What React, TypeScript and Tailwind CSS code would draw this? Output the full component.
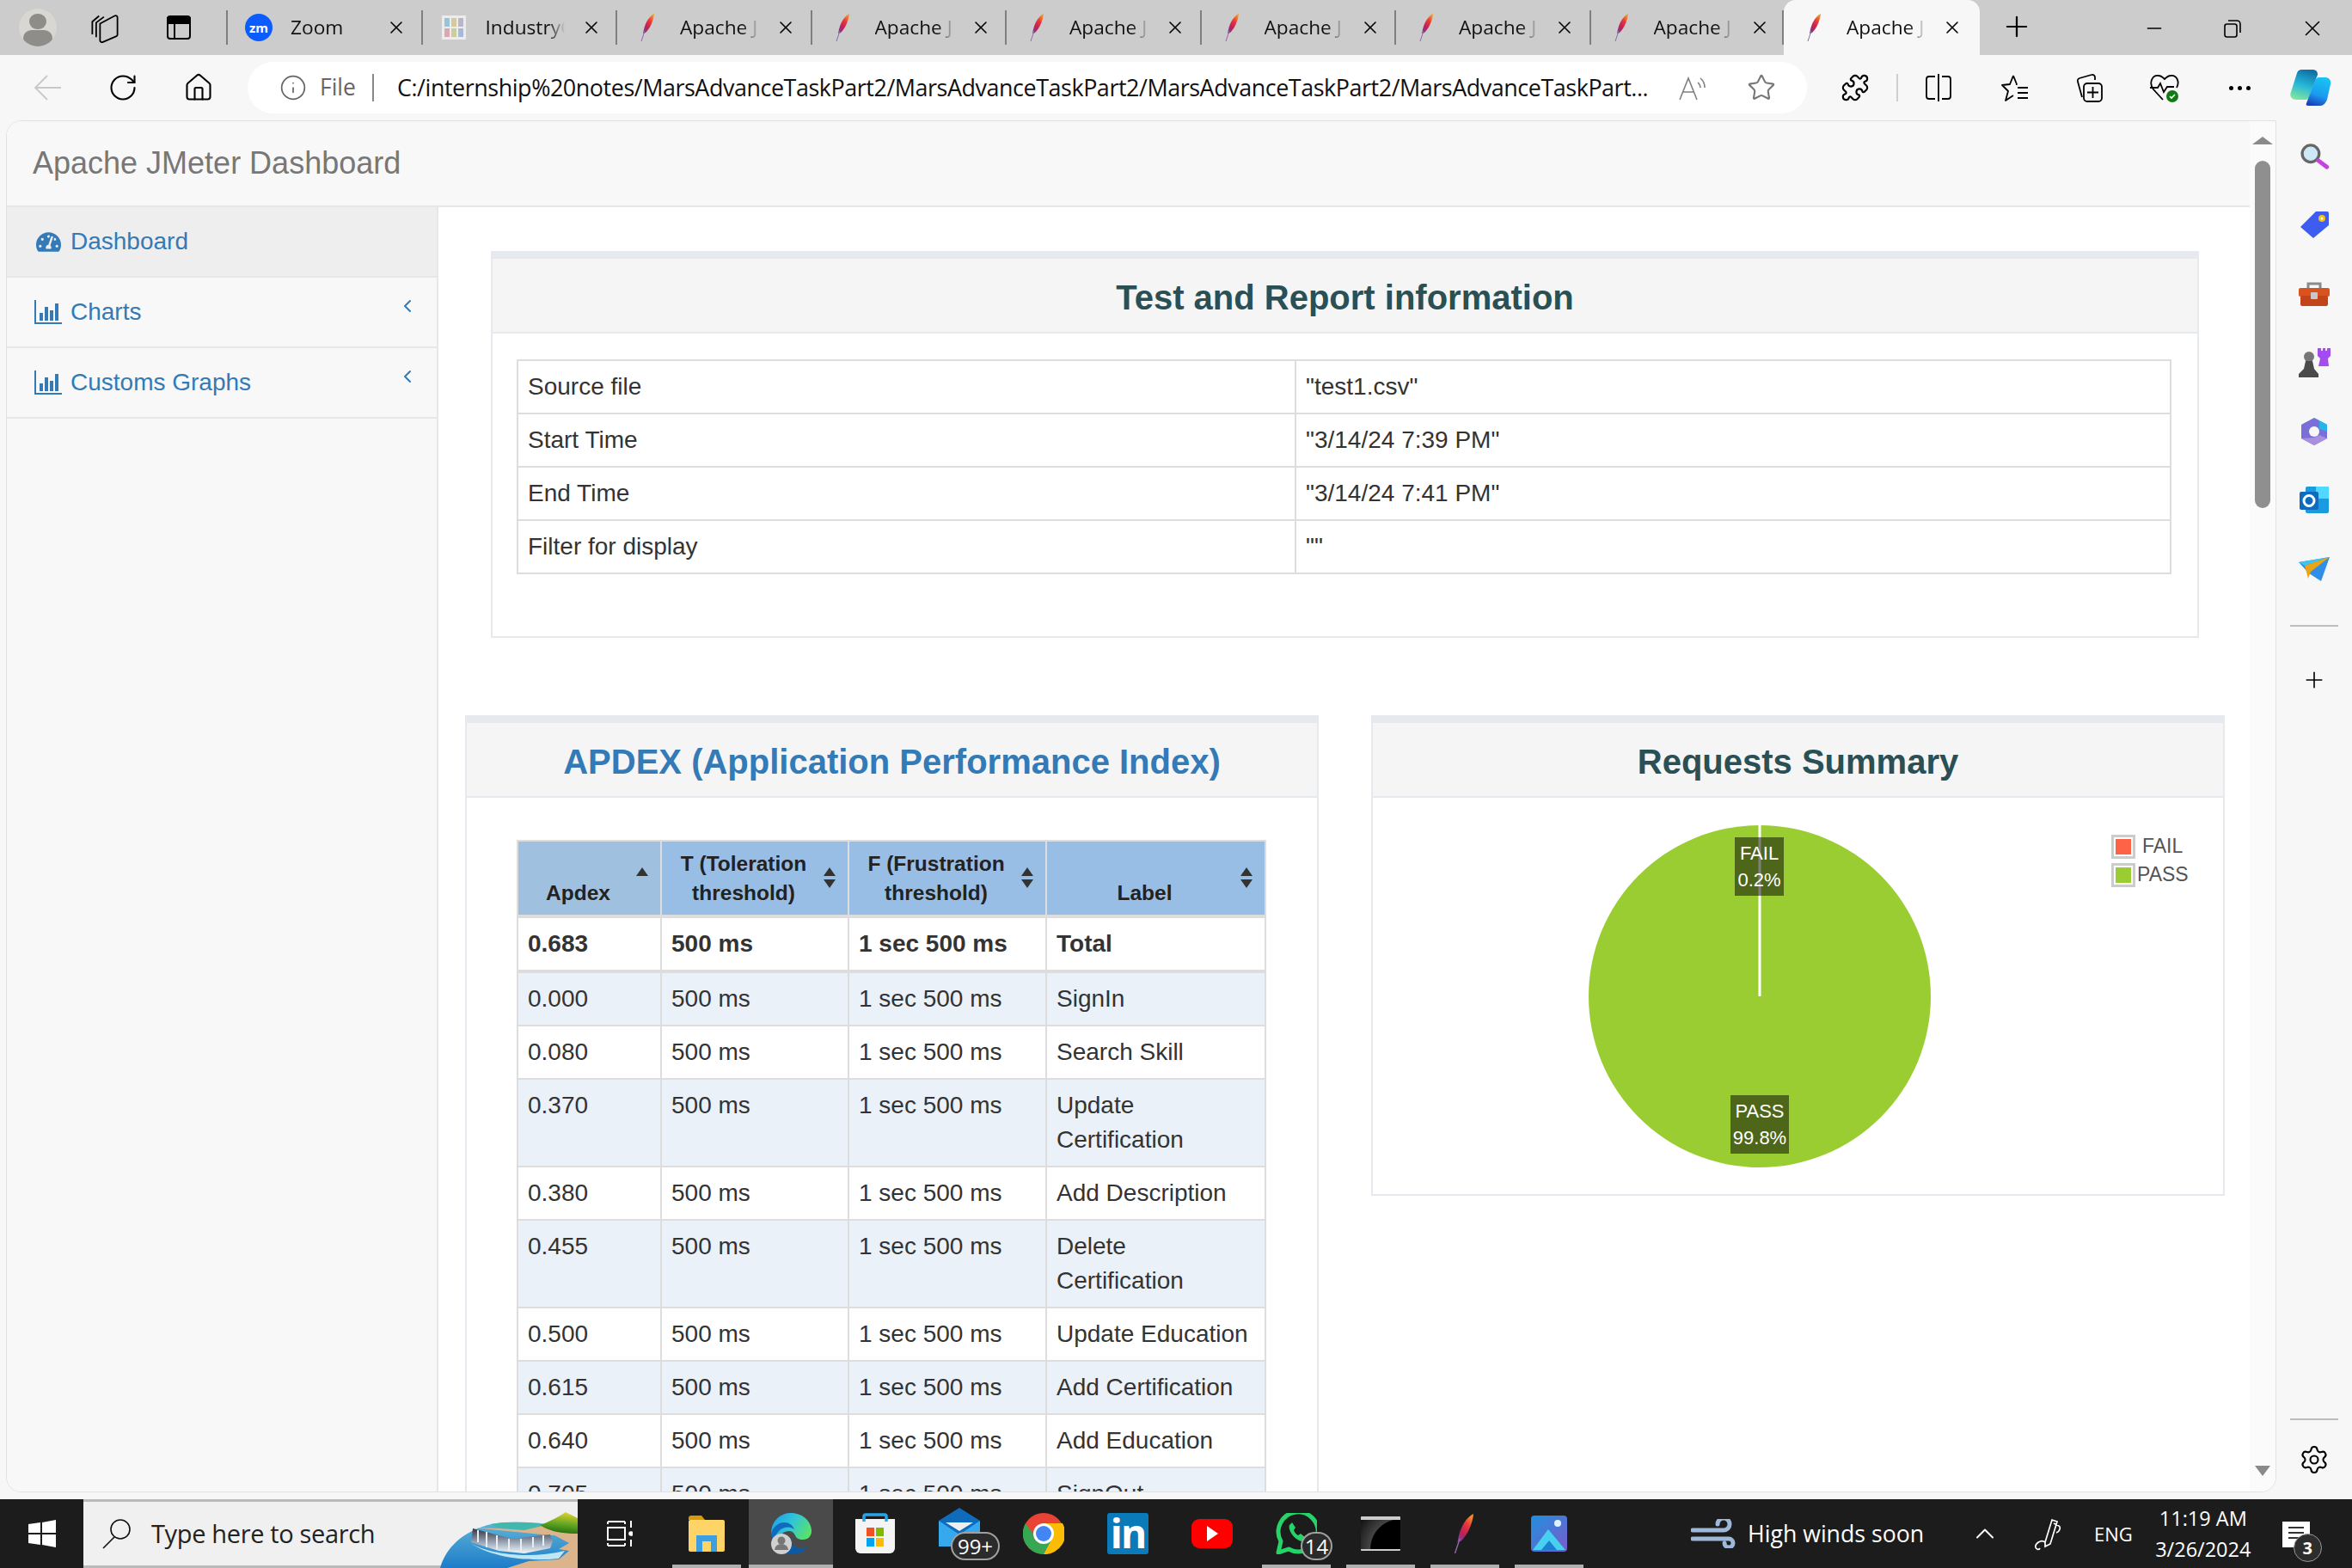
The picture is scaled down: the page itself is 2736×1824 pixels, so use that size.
import { ChevronLeft, ChevronUp, House, Info, Minus, Plus, Puzzle, RotateCw, Settings, Star, X } from 'lucide-react';
import { FaTachometerAlt } from 'react-icons/fa';

const apdexRows = [
  ['0.000', 'SignIn'],
  ['0.080', 'Search Skill'],
  ['0.370', 'Update Certification'],
  ['0.380', 'Add Description'],
  ['0.455', 'Delete Certification'],
  ['0.500', 'Update Education'],
  ['0.615', 'Add Certification'],
  ['0.640', 'Add Education'],
  ['0.705', 'SignOut'],
];

const infoRows = [
  ['Source file', '"test1.csv"'],
  ['Start Time', '"3/14/24 7:39 PM"'],
  ['End Time', '"3/14/24 7:41 PM"'],
  ['Filter for display', '""'],
];

function Feather({ className = 'w-[18px] h-[32px]' }: { className?: string }) {
  return (
    <svg viewBox="0 0 18 32" className={className}>
      <defs>
        <linearGradient id="feather" x1="0.8" y1="0" x2="0.2" y2="1">
          <stop offset="0" stopColor="#f79a23" />
          <stop offset="0.35" stopColor="#e8383b" />
          <stop offset="0.7" stopColor="#be2056" />
          <stop offset="1" stopColor="#7a3c96" />
        </linearGradient>
      </defs>
      <path d="M16 0C10 3 6 10 4 18L3 23 6 22C11 17 15 9 16 0Z" fill="url(#feather)" />
      <path d="M5 20L1 32" stroke="#8c6aa8" strokeWidth="1" fill="none" />
    </svg>
  );
}

function Tab({ title, icon, active }: { title: string; icon: React.ReactNode; active?: boolean }) {
  return (
    <div
      className={
        active
          ? 'w-[228px] h-[64px] flex items-center bg-[#f7f7f7] rounded-t-[14px] shrink-0'
          : 'w-[226.5px] h-[64px] flex items-center shrink-0'
      }
    >
      {!active && <div className="w-[2px] h-[40px] bg-[#7f7f7f]" />}
      <div className="w-[73px] h-full flex items-center pl-[20px]">{icon}</div>
      <div className="w-[98px] overflow-hidden whitespace-nowrap text-[22.7px] text-[#111] [mask-image:linear-gradient(to_right,black_74%,transparent_94%)]">
        {title}
      </div>
      <X className="ml-[13px] text-black" size={24} strokeWidth={1.6} />
    </div>
  );
}

function TabBar() {
  const feather = <span className="pl-[7px] flex"><Feather /></span>;
  return (
    <div className="h-[64px] bg-[#cccccc] flex items-start shrink-0">
      <div className="w-[263px] h-[64px] flex items-center shrink-0">
        <div className="ml-[22px] w-[44px] h-[44px] rounded-full bg-[#d8d7d2] overflow-hidden flex flex-col items-center">
          <div className="w-[20px] h-[22px] rounded-full bg-[#8f8d89] mt-[6px]" />
          <div className="w-[34px] h-[24px] rounded-full bg-[#8f8d89] mt-[1px]" />
        </div>
        <svg viewBox="0 0 32 32" className="w-[36px] h-[36px] ml-[38px] text-black" fill="none" stroke="currentColor" strokeWidth="1.6">
          <path d="M3 23V10l7-6M7 26V11l8-6" />
          <path d="M11 12l15-8a2 2 0 0 1 3 2v17a2 2 0 0 1-1 2l-14 6a2 2 0 0 1-3-2z" strokeLinejoin="round" />
        </svg>
        <svg viewBox="0 0 32 32" className="w-[32px] h-[32px] ml-[52px]" fill="none" stroke="#000" strokeWidth="2">
          <rect x="3" y="3" width="26" height="26" rx="3" />
          <path d="M3 5h26v6H3z" fill="#000" />
          <path d="M11 11v18" />
        </svg>
      </div>
      <Tab
        title="Zoom"
        icon={
          <div className="w-[32px] h-[32px] rounded-full bg-[#0b5cff] text-white text-[15px] font-bold leading-[32px] text-center">zm</div>
        }
      />
      <Tab
        title="IndustryConnect"
        icon={
          <div className="ml-[2px] w-[28px] h-[28px] bg-[#ececec] grid grid-cols-3 gap-[2px] p-[3px]">
            <span className="bg-[#9cc3d5]" /><span className="bg-[#d8c9a0]" /><span className="bg-[#b7b7c9]" />
            <span className="bg-[#d9a8b0]" /><span className="bg-[#c9cf9a]" /><span className="bg-[#a9b7d8]" />
          </div>
        }
      />
      {[0, 1, 2, 3, 4, 5].map((i) => (
        <Tab key={i} title="Apache JMeter" icon={feather} />
      ))}
      <div className="w-[2px] h-[40px] bg-[#7f7f7f] mt-[12px] ml-[-2px]" />
      <Tab title="Apache JMeter" icon={feather} active />
      <Plus className="ml-[24px] mt-[12px] text-black" size={38} strokeWidth={1.4} />
      <div className="flex items-center ml-[128px] mt-[18px] text-black">
        <Minus size={26} strokeWidth={1.5} />
        <svg viewBox="0 0 24 24" className="w-[24px] h-[24px] ml-[66px]" fill="none" stroke="#000" strokeWidth="1.6">
          <rect x="3" y="7" width="14" height="15" rx="2.5" />
          <path d="M7 3h10a4 4 0 0 1 4 4v10" />
        </svg>
        <X className="ml-[66px]" size={30} strokeWidth={1.3} />
      </div>
    </div>
  );
}

function Toolbar() {
  return (
    <div className="h-[76px] bg-[#f7f7f7] flex items-center shrink-0 text-black">
      <svg viewBox="0 0 36 36" className="w-[36px] h-[36px] ml-[38px] shrink-0" fill="none" stroke="#c8c8c8" strokeWidth="1.8">
        <path d="M3 18h30M17 4L3 18l14 14" />
      </svg>
      <RotateCw className="ml-[51px] shrink-0" size={36} strokeWidth={1.4} />
      <House className="ml-[52px] shrink-0" size={36} strokeWidth={1.4} />
      <div className="ml-[39px] w-[1814px] h-[60px] bg-white rounded-[30px] flex items-center shrink-0">
        <Info className="ml-[37px] text-[#666] shrink-0" size={32} strokeWidth={1.3} />
        <span className="ml-[15px] text-[26.5px] text-[#666] w-[46px]">File</span>
        <div className="ml-[15px] w-[2px] h-[32px] bg-[#888]" />
        <span className="ml-[27px] w-[1456px] whitespace-nowrap overflow-hidden text-[26.9px] tracking-[-0.44px] text-[#111]">
          C:/internship%20notes/MarsAdvanceTaskPart2/MarsAdvanceTaskPart2/MarsAdvanceTaskPart2/MarsAdvanceTaskPart...
        </span>
        <svg viewBox="0 0 34 34" className="w-[34px] h-[34px] ml-[34px] shrink-0" fill="none" stroke="#808080" strokeWidth="1.6">
          <path d="M2 31L12 6l10 25M6 22h12M23 11a8 8 0 0 1 3 6M26 6a14 14 0 0 1 5 11" />
        </svg>
        <Star className="ml-[46px] text-[#777] shrink-0" size={34} strokeWidth={1.5} />
      </div>
      <Puzzle className="ml-[39px] shrink-0" size={34} strokeWidth={1.5} />
      <div className="ml-[31px] w-[2px] h-[32px] bg-[#cfcfcf] shrink-0" />
      <svg viewBox="0 0 34 34" className="w-[34px] h-[34px] ml-[30px] shrink-0" fill="none" stroke="#000" strokeWidth="1.8">
        <path d="M13 4H6a3 3 0 0 0-3 3v20a3 3 0 0 0 3 3h7M21 4h7a3 3 0 0 1 3 3v20a3 3 0 0 1-3 3h-7M17 1v32" />
      </svg>
      <svg viewBox="0 0 34 34" className="w-[34px] h-[34px] ml-[55px] shrink-0" fill="none" stroke="#000" strokeWidth="1.8">
        <path d="M15 3l4 10h-1M15 3l-4 10-9 1 7 7-3 11 9-6M20 17h12M20 23h12M20 29h12" strokeLinejoin="round" />
      </svg>
      <svg viewBox="0 0 34 34" className="w-[34px] h-[34px] ml-[53px] shrink-0" fill="none" stroke="#000" strokeWidth="1.8">
        <path d="M8 28L3 10a3 3 0 0 1 2-4l14-4a3 3 0 0 1 4 3v3" />
        <rect x="10" y="12" width="21" height="21" rx="4" />
        <path d="M20.5 16v13M14 22.5h13" />
      </svg>
      <svg viewBox="0 0 36 36" className="w-[36px] h-[36px] ml-[52px] shrink-0" fill="none" stroke="#000" strokeWidth="1.8">
        <path d="M16 32L5 20C-1 12 4 3 11 4c3 0 5 2 7 4 2-2 4-4 7-4 7-1 11 7 7 14" />
        <path d="M1 18h9l3-5 4 10 4-6h8" />
        <circle cx="27" cy="28" r="7" fill="#107c10" stroke="none" />
        <path d="M24 28l2 2 4-4" stroke="#fff" strokeWidth="1.6" />
      </svg>
      <div className="ml-[57px] flex gap-[5px] shrink-0">
        <span className="w-[5px] h-[5px] rounded-full bg-black" />
        <span className="w-[5px] h-[5px] rounded-full bg-black" />
        <span className="w-[5px] h-[5px] rounded-full bg-black" />
      </div>
      <svg viewBox="0 0 48 42" className="w-[48px] h-[42px] ml-[46px] shrink-0">
        <defs>
          <linearGradient id="cop1" x1="0.6" y1="0" x2="0.3" y2="1">
            <stop offset="0" stopColor="#0f6fa8" />
            <stop offset="0.5" stopColor="#25b5d8" />
            <stop offset="1" stopColor="#7fe6a0" />
          </linearGradient>
          <linearGradient id="cop2" x1="0.6" y1="0" x2="0.3" y2="1">
            <stop offset="0" stopColor="#19c3f2" />
            <stop offset="0.6" stopColor="#1a9bf0" />
            <stop offset="1" stopColor="#1a3fb8" />
          </linearGradient>
        </defs>
        <path d="M13 0h13c4 0 6 2 6 6l-10 26c-1 2-2 3-4 3H7c-5 0-8-4-6-9L8 4c1-3 3-4 5-4z" fill="url(#cop1)" />
        <path d="M21 42h14c4 0 6-3 8-7l4-18c1-5-2-8-6-8h-7c-3 0-4 2-5 4l-10 26c-1 2 0 3 2 3z" fill="url(#cop2)" />
      </svg>
    </div>
  );
}

function ChartIcon() {
  return (
    <svg viewBox="0 0 32 28" className="w-[32px] h-[28px] shrink-0" fill="#337ab7">
      <path d="M0 0h2v26h30v2H0z" />
      <path d="M6 15h4v9H6zM12 8h4v16h-4zM18 12h4v12h-4zM24 4h4v20h-4z" />
    </svg>
  );
}

function NavItem({ label, icon, active, arrow }: { label: string; icon: React.ReactNode; active?: boolean; arrow?: boolean }) {
  return (
    <div className={`h-[82px] border-b-2 border-[#e7e7e7] flex items-center pl-[32px] pr-[22px] ${active ? 'bg-[#eeeeee]' : ''}`}>
      <div className="w-[42px] flex">{icon}</div>
      <span className="text-[28px] text-[#337ab7]">{label}</span>
      {arrow && <ChevronLeft className="ml-auto mt-[-14px] text-[#337ab7]" size={24} strokeWidth={2} />}
    </div>
  );
}

function PanelHeader({ title, color }: { title: string; color: string }) {
  return (
    <div className="h-[96px] bg-[#f5f5f5] border-t-[9px] border-t-[#e6e9ed] border-b-2 border-b-[#e6e9ed] pt-[4px] flex items-center justify-center">
      <h3 className="text-[40px] font-bold" style={{ color }}>{title}</h3>
    </div>
  );
}

function SortIcon({ up }: { up?: boolean }) {
  return (
    <svg viewBox="0 0 16 28" className="absolute right-[13px] top-[28px] w-[16px] h-[28px]" fill="#333">
      <path d="M8 2l7 10H1z" />
      {!up && <path d="M8 26l7-10H1z" />}
    </svg>
  );
}

function HeaderCell({ title, up, bg }: { title: React.ReactNode; up?: boolean; bg: string }) {
  return (
    <th className="relative border-2 border-[#dddddd] align-bottom text-center text-[24.5px] leading-[34px] font-bold text-[#222] pb-[8px] pt-[9px] pl-[6px] pr-[32px]" style={{ background: bg }}>
      {title}
      <SortIcon up={up} />
    </th>
  );
}

function ApdexTable() {
  const cell = 'border-2 border-[#dddddd] align-top pl-[11px] pr-[9px] py-[10px]';
  return (
    <table className="w-[870px] table-fixed border-collapse text-[28px] leading-[40px] text-[#333]">
      <colgroup>
        <col className="w-[167px]" />
        <col className="w-[218px]" />
        <col className="w-[230px]" />
        <col className="w-[255px]" />
      </colgroup>
      <thead>
        <tr>
          <HeaderCell title="Apdex" up bg="#9fc0df" />
          <HeaderCell title={<>T (Toleration<br />threshold)</>} bg="#99bee6" />
          <HeaderCell title={<>F (Frustration<br />threshold)</>} bg="#99bee6" />
          <HeaderCell title="Label" bg="#99bee6" />
        </tr>
      </thead>
      <tbody>
        <tr className="font-bold border-t-[4px] border-b-[4px] border-[#dddddd]">
          <td className={cell}>0.683</td>
          <td className={cell}>500 ms</td>
          <td className={cell}>1 sec 500 ms</td>
          <td className={cell}>Total</td>
        </tr>
        {apdexRows.map(([score, label], i) => (
          <tr key={label} className={i % 2 === 0 ? 'bg-[#eaf1f9]' : 'bg-white'}>
            <td className={cell}>{score}</td>
            <td className={cell}>500 ms</td>
            <td className={cell}>1 sec 500 ms</td>
            <td className={cell}>{label}</td>
          </tr>
        ))}
      </tbody>
    </table>
  );
}

function PieChart() {
  return (
    <div className="relative h-[461px]">
      <div className="relative w-[398px] h-[398px] ml-[251px] top-[32px]">
        <svg viewBox="0 0 398 398" className="w-[398px] h-[398px]">
          <circle cx="199" cy="199" r="199" fill="#9acd32" />
          <rect x="197.5" y="0" width="3" height="199" fill="#ffffff" />
        </svg>
        <div className="absolute left-[170px] top-[14px] w-[57px] h-[68px] bg-black/50 text-white text-[22px] leading-[31px] text-center pt-[3px]">
          FAIL<br />0.2%
        </div>
        <div className="absolute left-[165px] top-[314px] w-[68px] h-[68px] bg-black/50 text-white text-[22px] leading-[31px] text-center pt-[3px]">
          PASS<br />99.8%
        </div>
      </div>
      <div className="absolute left-[859px] top-[40px] text-[23px] leading-[33px] text-[#545454]">
        <div className="flex items-center">
          <span className="w-[28px] h-[28px] border-[3px] border-[#ccc] p-[2px] flex"><span className="bg-[#ff6347] flex-1" /></span>
          <span className="ml-[8px]">FAIL</span>
        </div>
        <div className="flex items-center">
          <span className="w-[28px] h-[28px] border-[3px] border-[#ccc] p-[2px] flex"><span className="bg-[#9acd32] flex-1" /></span>
          <span className="ml-[2px]">PASS</span>
        </div>
      </div>
    </div>
  );
}

function MainContent() {
  return (
    <div className="flex-1 bg-white pt-[51px] pl-[31px] overflow-hidden h-[1494px]">
      <div className="ml-[30px] w-[1987px] h-[450px] border-2 border-[#e6e9ed] border-t-0">
        <PanelHeader title="Test and Report information" color="#2a4f54" />
        <div className="px-[28px] pt-[30px]">
          <table className="w-[1925px] table-fixed border-collapse text-[28px] leading-[40px] text-[#333]">
            <colgroup>
              <col className="w-[905px]" />
              <col />
            </colgroup>
            <tbody>
              {infoRows.map(([name, value]) => (
                <tr key={name}>
                  <td className="border-2 border-[#dddddd] pl-[11px] pr-[9px] py-[10px]">{name}</td>
                  <td className="border-2 border-[#dddddd] pl-[11px] pr-[9px] py-[10px]">{value}</td>
                </tr>
              ))}
            </tbody>
          </table>
        </div>
      </div>
      <div className="flex items-start gap-[61px] mt-[90px] w-[2047px]">
        <div className="w-[993px] h-[1200px] border-2 border-[#e6e9ed] border-t-0 shrink-0">
          <PanelHeader title="APDEX (Application Performance Index)" color="#337ab7" />
          <div className="pl-[58px] pt-[49px]">
            <ApdexTable />
          </div>
        </div>
        <div className="w-[993px] border-2 border-[#e6e9ed] border-t-0 shrink-0">
          <PanelHeader title="Requests Summary" color="#2a4f54" />
          <PieChart />
        </div>
      </div>
    </div>
  );
}

function Scrollbar() {
  return (
    <div className="w-[30px] bg-[#fbfbfb] flex flex-col items-center shrink-0 pt-[18px] pb-[18px]">
      <div className="w-0 h-0 border-x-[12px] border-x-transparent border-b-[9px] border-b-[#8a8a8a]" />
      <div className="w-[18px] h-[404px] rounded-[9px] bg-[#8f8f8f] mt-[19px]" />
      <div className="w-0 h-0 border-x-[9px] border-x-transparent border-t-[12px] border-t-[#8a8a8a] mt-auto" />
    </div>
  );
}

function SideIcons() {
  const slot = 'h-[80px] flex items-center justify-center shrink-0';
  return (
    <div className="flex-1 flex flex-col items-center pt-[2px] h-[1604px]">
      <div className={slot}>
        <svg viewBox="0 0 44 36" className="w-[36px] h-[30px]">
          <circle cx="17" cy="14" r="12" fill="#cfe8f8" stroke="#666" strokeWidth="4" />
          <path d="M28 24l12 9" stroke="#c840e0" strokeWidth="6" strokeLinecap="round" />
        </svg>
      </div>
      <div className={slot}>
        <svg viewBox="0 0 36 36" className="w-[36px] h-[36px]">
          <path d="M20 2h13a2 2 0 0 1 2 2v14L17 33 2 20z" fill="#3f5cf0" />
          <circle cx="27" cy="10" r="4" fill="#f3c012" />
          <circle cx="27" cy="10" r="1.5" fill="#fff" />
        </svg>
      </div>
      <div className={slot}>
        <svg viewBox="0 0 38 30" className="w-[38px] h-[30px]">
          <path d="M12 8V3h14v5" fill="none" stroke="#8a8a8a" strokeWidth="3" />
          <rect x="1" y="8" width="36" height="10" rx="2" fill="#d9531e" />
          <rect x="3" y="17" width="32" height="12" rx="2" fill="#c4441a" />
          <rect x="15" y="13" width="8" height="8" rx="1" fill="#c8c8c8" />
        </svg>
      </div>
      <div className={slot}>
        <svg viewBox="0 0 38 36" className="w-[38px] h-[36px]">
          <path d="M23 1h4v3h2V1h3v3h2V1h4v9l-3 3 1 9H24l2-9-3-3z" fill="#a64bf0" />
          <circle cx="13" cy="11" r="6" fill="#777" />
          <path d="M9 16h8l2 9 5 6v4H1v-4l6-6z" fill="#4a4a4a" />
        </svg>
      </div>
      <div className={slot}>
        <svg viewBox="0 0 36 36" className="w-[36px] h-[36px]">
          <path d="M18 2l15 8v16l-15 8-15-8V10z" fill="#7a6fd8" />
          <path d="M18 2l15 8v8l-9-3V6z" fill="#25b5e8" />
          <path d="M3 26l15 8 15-8-9-4-6 3z" fill="#a88fe0" />
          <circle cx="18" cy="18" r="6" fill="#f7f7f7" />
        </svg>
      </div>
      <div className={slot}>
        <svg viewBox="0 0 36 36" className="w-[36px] h-[36px]">
          <rect x="8" y="2" width="27" height="31" rx="2" fill="#1a9be0" />
          <rect x="20" y="2" width="15" height="14" fill="#50d9ff" />
          <rect x="1" y="8" width="22" height="21" rx="2" fill="#0f6cbd" />
          <circle cx="12" cy="18.5" r="6" fill="none" stroke="#fff" strokeWidth="3" />
        </svg>
      </div>
      <div className={slot}>
        <svg viewBox="0 0 38 30" className="w-[38px] h-[30px]">
          <path d="M1 7L37 1 27 29 13 20z" fill="#2f8fe8" />
          <path d="M1 7l36-6L8 11z" fill="#40c4f0" />
          <path d="M8 11L37 1 15 18l-3 8z" fill="#eba414" />
        </svg>
      </div>
      <div className="w-[56px] h-[2px] bg-[#bdbdbd] mt-[25px]" />
      <Plus className="mt-[47px] text-black" size={30} strokeWidth={1.3} />
      <div className="w-[56px] h-[2px] bg-[#bdbdbd] mt-auto" />
      <Settings className="mt-[28px] mb-[28px] text-black" size={36} strokeWidth={1.4} />
    </div>
  );
}

function TrayBadge({ value, className }: { value: string; className: string }) {
  return (
    <span className={`absolute rounded-full bg-[#2b2b2b] border-2 border-[#a0a0a0] text-white text-[24px] leading-[29px] text-center ${className}`}>
      {value}
    </span>
  );
}

function TaskSlot({ children, active, open }: { children: React.ReactNode; active?: boolean; open?: boolean }) {
  return (
    <div className={`relative w-[98px] h-[80px] flex items-center justify-center shrink-0 ${active ? 'bg-[#4a4a4a]' : ''}`}>
      {children}
      {open && <div className={`absolute bottom-0 h-[4px] bg-[#b0b0b0] ${active ? 'inset-x-0' : 'inset-x-[9px]'}`} />}
    </div>
  );
}

function SearchArt() {
  return (
    <svg viewBox="0 0 172 80" className="absolute right-0 top-[-3px] w-[172px] h-[80px]">
      <defs>
        <linearGradient id="lake" x1="0" y1="0" x2="0" y2="1">
          <stop offset="0" stopColor="#5db4d8" />
          <stop offset="1" stopColor="#1e7cc8" />
        </linearGradient>
        <linearGradient id="fall" x1="0" y1="0" x2="0" y2="1">
          <stop offset="0" stopColor="#2f3440" />
          <stop offset="0.55" stopColor="#9aa4b4" />
          <stop offset="1" stopColor="#f2f8fc" />
        </linearGradient>
        <linearGradient id="leaf" x1="0.7" y1="0" x2="0.5" y2="1">
          <stop offset="0" stopColor="#e0d430" />
          <stop offset="0.6" stopColor="#5aa020" />
          <stop offset="1" stopColor="#256a10" />
        </linearGradient>
      </defs>
      <path d="M12 80C20 50 50 30 85 27c25-1 45 0 55 3l32 10v40z" fill="url(#lake)" />
      <path d="M70 29c20-3 45-3 65 1l-25 7-30-4z" fill="#40b8ae" />
      <path d="M50 33l30 1 30 2 25-6 37 8v42H90l25-8 35-2 12-10-12-2 12-7-17-9-5 0z" fill="#dcb48c" />
      <path d="M50 34l45 12 45-5 3 8-3 8-30 6-30-3-32-10z" fill="url(#fall)" />
      <path d="M56 36v14M66 38v18M78 42v16M92 46v14M106 46v14M120 44v12M132 42v12" stroke="#e8eef4" strokeWidth="2" />
      <path d="M46 50c20 14 70 20 111 10l-7 9c-40 4-80-2-104-19z" fill="#bfe6f4" />
      <path d="M128 30c12-4 22-10 30-15l14 7v18c-17 0-32-2-44-10z" fill="url(#leaf)" />
    </svg>
  );
}

function Taskbar() {
  return (
    <div className="h-[80px] bg-[#1c1c1c] flex items-center shrink-0 text-white">
      <div className="w-[97px] flex justify-center shrink-0">
        <svg viewBox="0 0 32 32" className="w-[32px] h-[32px]" fill="#fff">
          <path d="M0 5l14-2v12H0zM16 3l16-3v15H16zM0 17h14v12L0 27zM16 17h16v15l-16-3z" />
        </svg>
      </div>
      <div className="relative w-[575px] h-[80px] bg-[#f0f0f0] border-y-[3px] border-[#bbbbbb] flex items-center shrink-0 text-[#222]">
        <svg viewBox="0 0 36 36" className="w-[36px] h-[36px] ml-[21px] shrink-0" fill="none" stroke="#111" strokeWidth="1.6">
          <circle cx="22" cy="13" r="11" />
          <path d="M15 22L2 35" />
        </svg>
        <span className="ml-[22px] text-[29px] tracking-[-0.35px]">Type here to search</span>
        <SearchArt />
      </div>
      <div className="w-[101px] flex justify-center shrink-0 pr-[4px]">
        <svg viewBox="0 0 30 32" className="w-[30px] h-[32px]" fill="none" stroke="#fff" strokeWidth="2">
          <path d="M1 2h20M1 9h20v14H1zM1 30h20M1 30v-3M21 30v-3M1 2v3M21 2v3" />
          <circle cx="28" cy="16" r="1.8" fill="#fff" />
          <path d="M28 1v8M28 23v8" />
        </svg>
      </div>
      <TaskSlot open>
        <svg viewBox="0 0 44 46" className="w-[44px] h-[46px]">
          <path d="M1 5a3 3 0 0 1 3-3h12l4 5h-19z" fill="#d99a06" />
          <rect x="1" y="7" width="42" height="37" rx="2" fill="#ffd466" />
          <rect x="10" y="25" width="24" height="19" fill="#3d9ee0" />
          <rect x="17" y="32" width="10" height="12" fill="#ffd466" />
        </svg>
      </TaskSlot>
      <TaskSlot active open>
        <svg viewBox="0 0 48 48" className="w-[48px] h-[48px]">
          <defs>
            <linearGradient id="edge" x1="0" y1="0.2" x2="1" y2="0.6">
              <stop offset="0" stopColor="#1fa0e8" />
              <stop offset="0.5" stopColor="#32c4d8" />
              <stop offset="1" stopColor="#58e26a" />
            </linearGradient>
          </defs>
          <path d="M1 24C1 10 11 0 24 0c14 0 24 10 24 21 0 6-4 10-10 10-5 0-8-2-9-5-1-2-3-5-7-5-6 0-11 4-13 9z" fill="url(#edge)" />
          <path d="M9 38c4 7 10 10 17 10 8 0 14-4 18-9-4 2-10 3-15 0-5-3-5-7-4-10-6 0-13 2-16 9z" fill="#0c59a4" />
          <path d="M1 24c2-8 9-13 15-13 6 0 10 3 12 8-6-4-13-3-18 2-3 3-5 7-5 11-2-2-4-5-4-8z" fill="#0f6cbd" />
          <circle cx="13" cy="36" r="12" fill="#d0d0d0" />
          <circle cx="13" cy="32" r="4.5" fill="#777" />
          <path d="M5 43a8 7 0 0 1 16 0z" fill="#777" />
        </svg>
      </TaskSlot>
      <TaskSlot>
        <svg viewBox="0 0 46 48" className="w-[46px] h-[48px]">
          <path d="M0 7h46v34a6 6 0 0 1-6 6H6a6 6 0 0 1-6-6z" fill="#f4f4f4" />
          <path d="M10 10V4a2 2 0 0 1 2-2h22a2 2 0 0 1 2 2v6" fill="none" stroke="#26a6e8" strokeWidth="3.5" />
          <rect x="13" y="17" width="9" height="10" fill="#f25022" />
          <rect x="24" y="17" width="9" height="10" fill="#7fba00" />
          <rect x="13" y="29" width="9" height="10" fill="#00a4ef" />
          <rect x="24" y="29" width="9" height="10" fill="#ffb900" />
        </svg>
      </TaskSlot>
      <TaskSlot>
        <svg viewBox="0 0 48 45" className="w-[48px] h-[45px] mt-[-15px]">
          <path d="M24 0L48 15v30H0V15z" fill="#0f6cbd" />
          <path d="M0 15l24 16 24-16v30H0z" fill="#35a8ee" />
          <path d="M8 17h32L24 27z" fill="#eeeeee" />
        </svg>
        <TrayBadge value="99+" className="left-[39px] top-[38px] w-[57px] h-[33px]" />
      </TaskSlot>
      <TaskSlot>
        <svg viewBox="0 0 48 48" className="w-[48px] h-[48px]">
          <circle cx="24" cy="24" r="24" fill="#ea4335" />
          <path d="M3 12l21 36a24 24 0 0 1-21-36z" fill="#34a853" />
          <path d="M24 48L35 27l-11-15h22a24 24 0 0 1-22 36z" fill="#fbbc05" />
          <path d="M3 12l21 36 11-21H14z" fill="#34a853" />
          <circle cx="24" cy="24" r="12" fill="#fff" />
          <circle cx="24" cy="24" r="9" fill="#4285f4" />
        </svg>
      </TaskSlot>
      <TaskSlot>
        <div className="w-[48px] h-[48px] bg-[#0a7ab8] rounded-[3px] text-white text-[46px] leading-[46px] font-bold text-center tracking-[-2px]">in</div>
      </TaskSlot>
      <TaskSlot>
        <div className="w-[48px] h-[34px] bg-[#ff0000] rounded-[9px] flex items-center justify-center">
          <div className="w-0 h-0 border-y-[9px] border-y-transparent border-l-[13px] border-l-white" />
        </div>
      </TaskSlot>
      <TaskSlot open>
        <svg viewBox="0 0 48 48" className="w-[48px] h-[48px]">
          <path d="M3 46l3-13a23 23 0 1 1 9 9z" fill="none" stroke="#25d366" strokeWidth="5" strokeLinejoin="round" />
          <path d="M16 14c-2 5 4 16 14 19l5-4-6-5-3 2c-2-1-4-3-5-6l2-3-4-6z" fill="#25d366" />
        </svg>
        <TrayBadge value="14" className="left-[54px] top-[38px] w-[37px] h-[33px] text-[22px]" />
      </TaskSlot>
      <TaskSlot open>
        <div className="w-[46px] h-[40px] bg-black border-t-[4px] border-b-[2px] border-[#cccccc] rounded-[1px] [background-image:radial-gradient(circle_at_100%_100%,#000_60%,#444_62%,#111_100%)]" />
      </TaskSlot>
      <TaskSlot open>
        <Feather className="w-[26px] h-[46px]" />
      </TaskSlot>
      <TaskSlot open>
        <svg viewBox="0 0 42 42" className="w-[42px] h-[42px]">
          <defs>
            <linearGradient id="photos" x1="0" y1="0" x2="1" y2="1">
              <stop offset="0" stopColor="#1f8fe0" />
              <stop offset="1" stopColor="#7a5cc8" />
            </linearGradient>
          </defs>
          <rect width="42" height="42" rx="4" fill="url(#photos)" />
          <circle cx="31" cy="9" r="4" fill="#dff3ff" />
          <path d="M2 40l18-24 20 24z" fill="#48d0f0" />
          <path d="M12 40l9-11 9 11z" fill="#1d7fd0" />
        </svg>
      </TaskSlot>
      <svg viewBox="0 0 52 34" className="w-[52px] h-[34px] ml-[116px] shrink-0" fill="none" stroke="#9db8d8" strokeWidth="5" strokeLinecap="round">
        <path d="M2 13h36a7 7 0 1 0-7-7M2 23h42a5 5 0 1 1-5 5" />
      </svg>
      <span className="ml-[14px] w-[210px] text-[26.7px] whitespace-nowrap shrink-0">High winds soon</span>
      <ChevronUp className="ml-[48px] shrink-0" size={36} strokeWidth={1.3} />
      <svg viewBox="0 0 34 40" className="w-[34px] h-[40px] ml-[38px] shrink-0" fill="none" stroke="#fff" strokeWidth="1.7">
        <path d="M14 30l8-26 6 2-8 26-6 3zM24 8l6 3c2 1 2 6-3 8M14 30c-5-4-12 2-11 6 1 3 4 3 5 1" />
      </svg>
      <span className="ml-[37px] text-[22px] shrink-0">ENG</span>
      <div className="ml-[25px] w-[114px] text-center text-[23.5px] leading-[36px] shrink-0 whitespace-nowrap">
        <div>11:19 AM</div>
        <div>3/26/2024</div>
      </div>
      <div className="relative ml-[35px] w-[32px] h-[30px] bg-white shrink-0 mt-[2px]">
        <div className="mx-[7px] mt-[6px] h-[2px] bg-[#333]" />
        <div className="mx-[7px] mt-[4px] h-[2px] bg-[#333]" />
        <div className="mx-[7px] mt-[4px] h-[2px] bg-[#333]" />
        <span className="absolute left-[13px] top-[14px] w-[33px] h-[33px] rounded-full bg-[#2d2d2d] border border-[#9a9a9a] text-[20px] leading-[31px] text-center font-bold text-white">3</span>
      </div>
    </div>
  );
}

export default function App() {
  return (
    <div className="w-[2736px] h-[1824px] flex flex-col overflow-hidden bg-[#f7f7f7]" style={{ fontFamily: '"Open Sans", sans-serif' }}>
      <TabBar />
      <Toolbar />
      <div className="h-[1604px] flex shrink-0">
        <div className="ml-[7px] w-[2641px] h-[1596px] flex border border-[#e2e2e2] rounded-tl-[18px] rounded-b-[18px] overflow-hidden bg-white" style={{ fontFamily: '"Liberation Sans", Arial, sans-serif' }}>
          <div className="flex-1 flex flex-col min-w-0">
            <div className="h-[100px] bg-[#f8f8f8] border-b-2 border-[#e7e7e7] flex items-center pl-[30px] shrink-0">
              <span className="text-[36px] text-[#777777]">Apache JMeter Dashboard</span>
            </div>
            <div className="flex flex-1">
              <div className="w-[502px] bg-[#f8f8f8] border-r-2 border-[#e7e7e7] shrink-0">
                <NavItem label="Dashboard" active icon={<FaTachometerAlt className="text-[#337ab7] ml-[2px]" size={29} />} />
                <NavItem label="Charts" arrow icon={<ChartIcon />} />
                <NavItem label="Customs Graphs" arrow icon={<ChartIcon />} />
              </div>
              <MainContent />
            </div>
          </div>
          <Scrollbar />
        </div>
        <SideIcons />
      </div>
      <Taskbar />
    </div>
  );
}
